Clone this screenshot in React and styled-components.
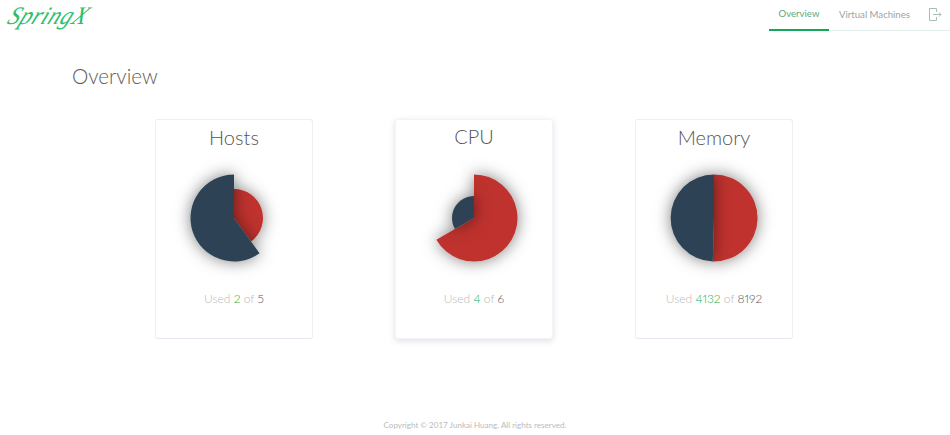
import React from "react";
import styled, { createGlobalStyle } from "styled-components";

const Global = createGlobalStyle`
  html, body { margin: 0; padding: 0; background: #fff; }
  body { font-family: "Lato", "Open Sans", sans-serif; font-weight: 300; }
`;
const Page = styled.div`
  width: 950px; height: 435px; display: flex; flex-direction: column; overflow: hidden; position: relative;
`;
const Header = styled.header`
  height: 31px; display: flex; justify-content: space-between; align-items: flex-start; flex: none;
`;
const Logo = styled.div`
  font-family: "Liberation Serif", serif; font-style: italic; font-size: 23px; line-height: 30px; color: #2cbf6c;
  margin-left: 2px; margin-top: 3px; letter-spacing: .5px; transform: skewX(-24deg) scaleY(1.1); transform-origin: left bottom;
`;
const Nav = styled.nav`
  display: flex; align-items: stretch; height: 31px; border-bottom: 1px solid #e3efec; box-sizing: border-box;
`;
const Tab = styled.a`
  display: flex; align-items: center; justify-content: center; width: ${p => p.$w}px; box-sizing: border-box; height: 31px;
  font-size: 9.6px; font-weight: 400; padding-bottom: 3px; color: ${p => p.$active ? "#5aa880" : "#98a6a2"};
  border-bottom: ${p => p.$active ? "2px solid #14a85a" : "0"};
`;
const IconButton = styled.div`
  width: 30px; display: flex; padding: 8px 0 0 9px; box-sizing: border-box; color: #a9bdb7;
`;
const Heading = styled.h1`
  margin: 33px 0 0 72px; font-size: 20.6px; line-height: 24px; font-weight: 300; color: #5b5b5b; flex: none;
`;
const Cards = styled.main`
  display: flex; gap: 82px; margin: 31px 0 0 155px; flex: none;
`;
const Card = styled.section`
  width: 158px; height: 220px; box-sizing: border-box; border: 1px solid #eeeef4; border-bottom-color: #e6e6ee; border-radius: 3px; background: #fff;
  display: flex; flex-direction: column; align-items: center;
  ${p => p.$raised && "border-color:#f3f3f8; box-shadow: 0 2px 6px rgba(90,90,140,.2);"}
`;
const Title = styled.h2`
  margin: ${p => p.$raised ? "3px 0 1px" : "4px 0 0"}; font-size: 20px; line-height: 26px; font-weight: 300; color: #555;
`;
const Chart = styled.svg`
  display: block; margin-top: 3px; overflow: visible;
`;
const Usage = styled.p`
  margin: 8px 0 0; font-size: 12px; line-height: 16px; font-weight: 300; color: #b9b9b9; font-variant-numeric: proportional-nums;
`;
const Used = styled.span` color: #12b355; `;
const Total = styled.span` color: #555; `;
const Footer = styled.footer`
  position: absolute; left: 0; right: 0; top: 420px; text-align: center; font-size: 8.05px; line-height: 10px; font-weight: 400; color: #bbb;
`;

const slice = (r, a0, a1) => {
  const c = 65;
  const p = a => [c + r * Math.sin(a * Math.PI / 180), c - r * Math.cos(a * Math.PI / 180)];
  const [x0, y0] = p(a0), [x1, y1] = p(a1);
  return `M${c} ${c}L${x0.toFixed(2)} ${y0.toFixed(2)}A${r} ${r} 0 ${a1 - a0 > 180 ? 1 : 0} 1 ${x1.toFixed(2)} ${y1.toFixed(2)}Z`;
};

const RED = "#bf322d", NAVY = "#2e4354";

function Pie({ id, used, total, big = 43.5, small }) {
  const a = used / total * 360;
  const redBig = a >= 180;
  const redR = redBig ? big : (small ?? big);
  const navyR = redBig ? (small ?? big) : big;
  return (
    <Chart width="130" height="130" viewBox="0 0 130 130">
      <defs>
        <filter id={id} x="-80%" y="-80%" width="260%" height="260%">
          <feDropShadow dx="0" dy="0" stdDeviation="8" floodColor="#000" floodOpacity=".5" />
        </filter>
      </defs>
      <path d={slice(redR, 0, a)} fill={RED} filter={`url(#${id})`} />
      <path d={slice(navyR, a, 360)} fill={NAVY} filter={`url(#${id})`} />
    </Chart>
  );
}

const data = [
  { id: "h", title: "Hosts", used: 2, total: 5, small: 29 },
  { id: "c", title: "CPU", used: 4, total: 6, small: 22, raised: true },
  { id: "m", title: "Memory", used: 4132, total: 8192 },
];

export default function App() {
  return (
    <Page>
      <Global />
      <Header>
        <Logo>SpringX</Logo>
        <Nav>
          <Tab $w={60} $active>Overview</Tab>
          <Tab $w={91}>Virtual Machines</Tab>
          <IconButton>
            <svg width="13" height="13" viewBox="0 0 13 13" fill="none" stroke="currentColor" strokeWidth="1">
              <path d="M7.5 4V.5H.5v12h7V9M4 6.5h8M10 4.5l2 2-2 2" />
            </svg>
          </IconButton>
        </Nav>
      </Header>
      <Heading>Overview</Heading>
      <Cards>
        {data.map(d => (
          <Card key={d.id} $raised={d.raised}>
            <Title $raised={d.raised}>{d.title}</Title>
            <Pie id={d.id} used={d.used} total={d.total} small={d.small} />
            <Usage>Used <Used>{d.used}</Used> of <Total>{d.total}</Total></Usage>
          </Card>
        ))}
      </Cards>
      <Footer>Copyright © 2017 Junkai Huang. All rights reserved.</Footer>
    </Page>
  );
}
